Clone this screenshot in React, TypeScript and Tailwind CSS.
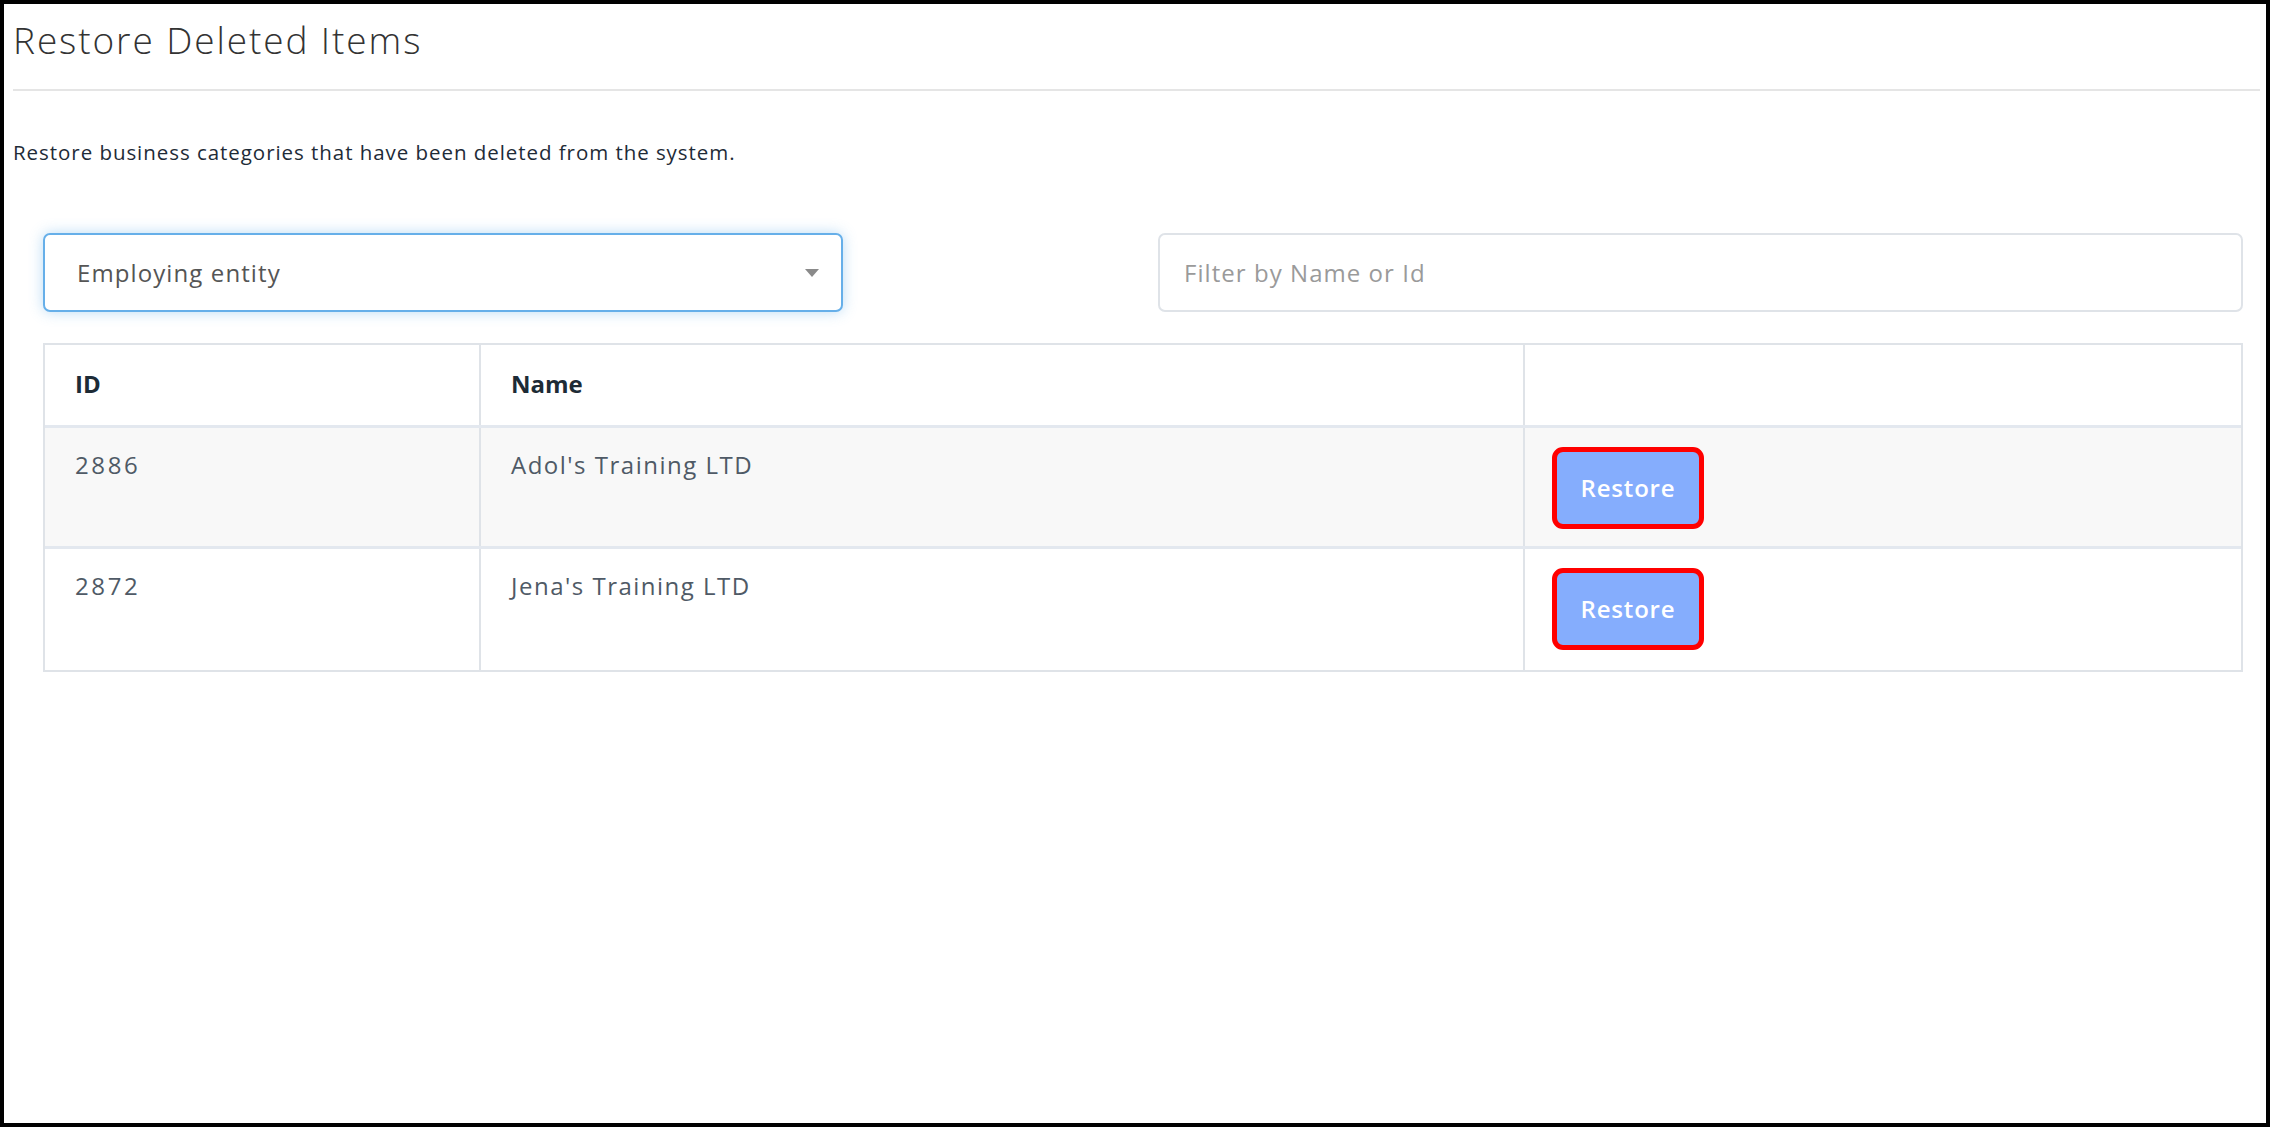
import React from "react";

const rows = [
  { id: "2886", name: "Adol's Training LTD" },
  { id: "2872", name: "Jena's Training LTD" },
];

export default function App() {
  return (
    <div
      className="w-[2270px] h-[1127px] border-4 border-black bg-white overflow-hidden"
      style={{ fontFamily: "'Open Sans', Lato, 'Liberation Sans', sans-serif" }}
    >
      <div className="pl-[9px] pr-[6px]">
        <h1 className="pt-[15px] text-[37px] leading-[42px] font-light text-[#333333] tracking-[1.9px]">
          Restore Deleted Items
        </h1>
        <div className="mt-[28px] h-[2px] bg-[#e5e5e5]" />
        <p className="mt-[48px] text-[20.5px] leading-[26px] text-[#1e2b37] tracking-[0.95px]">
          Restore business categories that have been deleted from the system.
        </p>
      </div>

      <div className="pl-[39px] pr-[23px]">
        <div className="mt-[68px] flex justify-between">
          <div className="relative w-[800px] h-[79px] rounded-[7px] border-2 border-[#66afe9] shadow-[0_0_14px_rgba(102,175,233,0.45)] bg-white flex items-center">
            <span className="pl-[32px] text-[24px] text-[#555555] tracking-[1.1px]">Employing entity</span>
            <svg className="absolute right-[22px] top-[34px]" width="14" height="9" viewBox="0 0 14 9">
              <path d="M0 0 L14 0 L7 8 Z" fill="#8a8a8a" />
            </svg>
          </div>
          <div className="w-[1085px] h-[79px] rounded-[7px] border-2 border-[#dfe3e8] bg-white flex items-center">
            <span className="pl-[24px] text-[24px] text-[#9a9a9a] tracking-[1.05px]">Filter by Name or Id</span>
          </div>
        </div>

        <div className="mt-[31px] border-2 border-[#dfe3e8]">
          <div className="grid grid-cols-[436px_1044px_1fr] h-[83px] border-b-[3px] border-[#e3e8ef]">
            <div className="pl-[30px] pt-[23px] text-[24px] leading-[32px] font-bold text-[#1d2b36] border-r-2 border-[#dfe3e8]">
              ID
            </div>
            <div className="pl-[30px] pt-[23px] text-[24px] leading-[32px] font-bold text-[#1d2b36] border-r-2 border-[#dfe3e8]">
              Name
            </div>
            <div />
          </div>
          {rows.map((r, i) => (
            <div
              key={r.id}
              className={
                "grid grid-cols-[436px_1044px_1fr] h-[121px] " +
                (i === 0 ? "bg-[#f8f8f8] border-b-[3px] border-[#e3e8ef]" : "bg-white")
              }
            >
              <div className="pl-[30px] pt-[21px] text-[24px] leading-[32px] text-[#4f5a66] tracking-[2.6px] border-r-2 border-[#dfe3e8]">
                {r.id}
              </div>
              <div className="pl-[30px] pt-[21px] text-[24px] leading-[32px] text-[#4f5a66] tracking-[1.5px] border-r-2 border-[#dfe3e8]">
                {r.name}
              </div>
              <div className="pl-[27px] pt-[19px]">
                <button className="w-[152px] h-[82px] rounded-[11px] border-[5px] border-[#ff0000] bg-[#85adfd] text-white text-[24px] font-semibold tracking-[0.8px]">
                  Restore
                </button>
              </div>
            </div>
          ))}
        </div>
      </div>
    </div>
  );
}
